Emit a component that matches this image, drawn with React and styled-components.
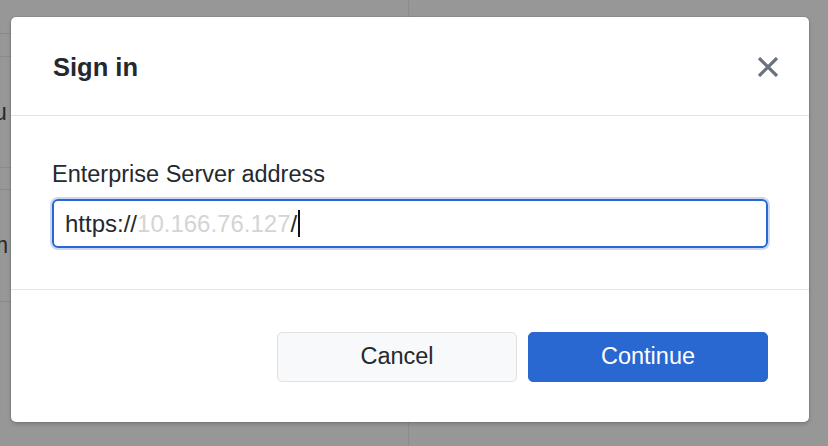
import React from "react";
import styled, { createGlobalStyle } from "styled-components";

const GlobalStyle = createGlobalStyle`
  html, body {
    margin: 0;
    padding: 0;
    width: 828px;
    height: 446px;
    overflow: hidden;
    background: #979797;
    font-family: "Liberation Sans", Arial, sans-serif;
  }
`;

const Page = styled.div`
  position: relative;
  width: 828px;
  height: 446px;
  overflow: hidden;
  background: #979797;
`;

const BehindApp = styled.div`
  display: grid;
  grid-template-columns: 409px 1fr;
  height: 100%;
`;

const ListPane = styled.div`
  border-right: 1px solid #8c8c8c;
  display: flex;
  flex-direction: column;
`;

const ListRow = styled.div`
  height: ${(p) => p.$height}px;
  border-bottom: 1px solid #8a8a8a;
  display: flex;
  align-items: center;
  font-size: 23px;
  color: #2a2a2a;
  text-indent: ${(p) => p.$indent || 0}px;
  white-space: nowrap;
`;

const Overlay = styled.div`
  position: absolute;
  inset: 0;
  padding: 17px 19px 0 11px;
`;

const Dialog = styled.div`
  background: #fff;
  border-radius: 5px;
  box-shadow: 0 0 0 1px rgba(0, 0, 0, 0.06), 0 2px 4px rgba(0, 0, 0, 0.18);
  display: flex;
  flex-direction: column;
  height: 405px;
  overflow: hidden;
`;

const Header = styled.div`
  height: 99px;
  display: flex;
  align-items: center;
  justify-content: space-between;
  padding: 2px 30px 0 42px;
  box-sizing: border-box;
  border-bottom: 1px solid #e1e4e8;
`;

const Title = styled.h2`
  margin: 0;
  font-size: 25.5px;
  font-weight: 700;
  color: #24292e;
`;

const CloseButton = styled.button`
  width: 22px;
  height: 22px;
  padding: 0;
  border: 0;
  background: transparent;
  display: flex;
  align-items: center;
  justify-content: center;
  cursor: pointer;
`;

const Body = styled.div`
  padding: 44px 41px 41px 41px;
  border-bottom: 1px solid #e1e4e8;
  display: flex;
  flex-direction: column;
`;

const Label = styled.label`
  font-size: 23.5px;
  line-height: 28px;
  color: #24292e;
  margin-bottom: 11px;
`;

const InputBox = styled.div`
  height: 49px;
  box-sizing: border-box;
  border: 2px solid #2b67d1;
  border-radius: 6px;
  box-shadow: 0 0 0 2px rgba(43, 103, 209, 0.25);
  display: flex;
  align-items: center;
  padding: 0 11px;
  font-size: 24px;
  color: #24292e;
  white-space: nowrap;
`;

const Redacted = styled.span`
  color: #d4d4d4;
`;

const Caret = styled.span`
  display: inline-block;
  width: 2px;
  height: 27px;
  background: #111;
  margin-left: 1px;
`;

const Footer = styled.div`
  flex: 1;
  display: flex;
  align-items: center;
  justify-content: flex-end;
  gap: 11px;
  padding: 1px 41px 0;
`;

const Button = styled.button`
  width: 240px;
  height: 50px;
  box-sizing: border-box;
  border-radius: 5px;
  font-family: "Liberation Sans", Arial, sans-serif;
  font-size: 23.5px;
  cursor: pointer;
  border: 1px solid ${(p) => (p.$primary ? "#2967d1" : "#dfe1e5")};
  background: ${(p) => (p.$primary ? "#2967d1" : "#f8f9fb")};
  color: ${(p) => (p.$primary ? "#ffffff" : "#24292e")};
`;

const CloseIcon = () => (
  <svg width="22" height="20" viewBox="0 0 22 20">
    <path
      d="M2 1 L20 19 M20 1 L2 19"
      stroke="#6a737d"
      strokeWidth="3.2"
      strokeLinecap="butt"
    />
  </svg>
);

const App = () => {
  return (
    <Page>
      <GlobalStyle />
      <BehindApp>
        <ListPane>
          <ListRow $height={33} />
          <ListRow $height={22} />
          <ListRow $height={110} $indent={-6}>
            u
          </ListRow>
          <ListRow $height={21} />
          <ListRow $height={111} $indent={-11}>
            m
          </ListRow>
        </ListPane>
        <div />
      </BehindApp>
      <Overlay>
        <Dialog>
          <Header>
            <Title>Sign in</Title>
            <CloseButton aria-label="Close">
              <CloseIcon />
            </CloseButton>
          </Header>
          <Body>
            <Label>Enterprise Server address</Label>
            <InputBox>
              https://<Redacted>10.166.76.127</Redacted>/<Caret />
            </InputBox>
          </Body>
          <Footer>
            <Button>Cancel</Button>
            <Button $primary>Continue</Button>
          </Footer>
        </Dialog>
      </Overlay>
    </Page>
  );
};

export default App;
